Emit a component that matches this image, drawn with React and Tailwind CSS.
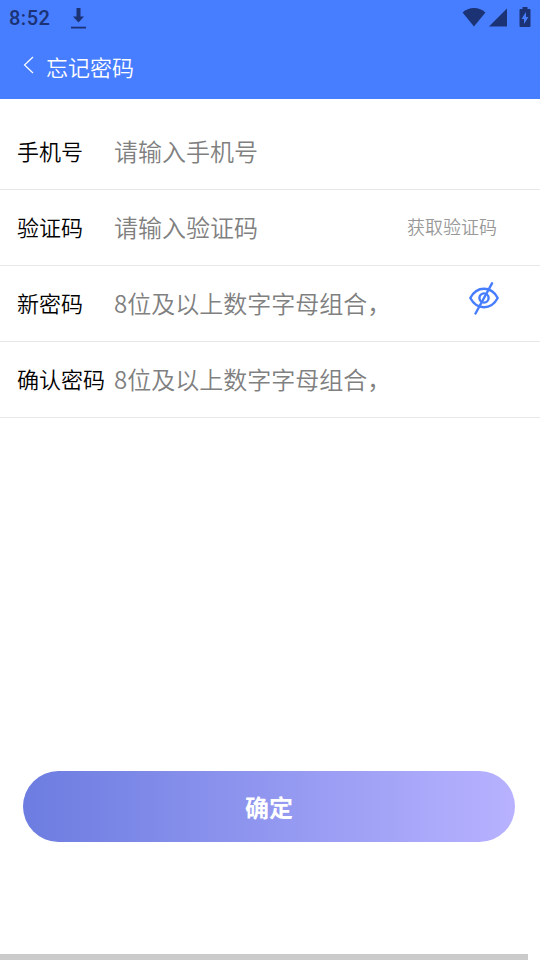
import React, { useState } from 'react';

const StatusBar = () => (
  <div className="flex h-9 items-center justify-between px-[9px] text-[#1b3275]">
    <div className="flex items-center gap-5">
      <span className="font-['Roboto',sans-serif] text-[20px] font-medium leading-6 tracking-wide">8:52</span>
      <svg width="17" height="22" viewBox="0 0 17 22" fill="currentColor" aria-hidden="true">
        <path d="M6.500 1h4v8.500H14l-5.500 6L3 9.500h3.500z" />
        <path d="M1 19.700h15v1.800H1z" />
      </svg>
    </div>
    <div className="flex items-center pb-0.5">
      <svg width="24" height="20" viewBox="0 0 24 20" fill="currentColor" aria-hidden="true">
        <path d="M12 19.500 0.600 5.500C3.700 2.500 7.600 1 12 1s8.300 1.500 11.400 4.500z" />
      </svg>
      <svg className="ml-[3px]" width="18" height="20" viewBox="0 0 18 20" fill="currentColor" aria-hidden="true">
        <path d="M18 1.500v18H0z" />
      </svg>
      <svg className="ml-3" width="12" height="20" viewBox="0 0 12 20" fill="currentColor" aria-hidden="true">
        <path fillRule="evenodd" d="M3.500 0h5v2H10.500q1 0 1 1v16q0 1-1 1H1.500q-1 0-1-1V3q0-1 1-1h2zM7 5l-4.500 7H5v5l4.500-7H7z" />
      </svg>
    </div>
  </div>
);

const EyeIcon = ({ slashed }) => (
  <svg width="30" height="34" viewBox="0 0 30 34" fill="none" stroke="#477dff" strokeWidth="2.400" strokeLinecap="round" strokeLinejoin="round" aria-hidden="true">
    <path d="M1.300 16C4.500 10 9.500 6.800 15 6.800s10.500 3.200 13.700 9.200C25.500 22 20.500 25.200 15 25.200S4.500 22 1.300 16z" />
    <circle cx="15" cy="16" r="4.600" />
    {slashed && <path d="M23 1.300 6.500 31.500" />}
  </svg>
);

const Field = ({ id, label, children, ...inputProps }) => (
  <div className="flex h-[76px] items-center border-b border-[#e8e8e8] pb-0.5 pl-[17px] pr-[41px]">
    <label htmlFor={id} className="w-[97px] shrink-0 whitespace-nowrap text-[22px] text-black">
      {label}
    </label>
    <input
      id={id}
      className="h-full min-w-0 flex-1 bg-transparent text-[24px] text-black outline-none placeholder:text-[#808080]"
      {...inputProps}
    />
    {children}
  </div>
);

const App = () => {
  const [showPassword, setShowPassword] = useState(false);
  const passwordType = showPassword ? 'text' : 'password';

  return (
    <div className="flex min-h-screen flex-col bg-white font-['Noto_Sans_CJK_SC',sans-serif] font-[350]">
      <header className="bg-[#477dff]">
        <StatusBar />
        <div className="flex h-[63px] items-center pb-0.5 pl-[23px] text-white">
          <button type="button" aria-label="返回" className="mr-3 mb-1">
            <svg width="11" height="18" viewBox="0 0 11 18" fill="none" stroke="currentColor" strokeWidth="1.200" aria-hidden="true">
              <path d="M10 1 1.500 9l8.500 8" />
            </svg>
          </button>
          <h1 className="text-[22px] font-[350]">忘记密码</h1>
        </div>
      </header>

      <form className="flex flex-1 flex-col pt-[15px]" onSubmit={(e) => e.preventDefault()}>
        <Field id="phone" label="手机号" type="tel" placeholder="请输入手机号" />
        <Field id="code" label="验证码" type="text" placeholder="请输入验证码">
          <button type="button" className="mr-0.5 text-[18px] text-[#999999]">获取验证码</button>
        </Field>
        <Field id="password" label="新密码" type={passwordType} placeholder="8位及以上数字字母组合，">
          <button
            type="button"
            aria-label="显示密码"
            className="mt-4 self-start"
            onClick={() => setShowPassword(!showPassword)}
          >
            <EyeIcon slashed={!showPassword} />
          </button>
        </Field>
        <Field id="confirm" label="确认密码" type={passwordType} placeholder="8位及以上数字字母组合，" />

        <button
          type="submit"
          className="ml-[23px] mr-[25px] mt-auto mb-28 h-[71px] rounded-full bg-linear-to-r from-[#6c7ce0] to-[#b8b2ff] text-[24px] font-bold text-white"
        >
          确定
        </button>
      </form>

      <div className="mr-3 h-1.5 bg-[#cbcbcb]" />
    </div>
  );
};

export default App;
